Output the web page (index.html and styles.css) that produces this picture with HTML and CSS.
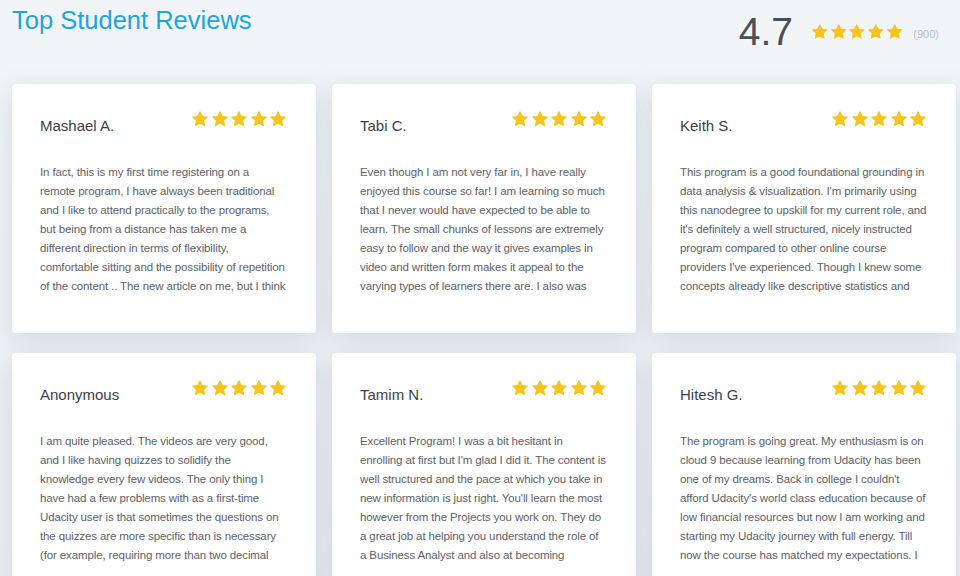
FILE: index.html
```html
<!DOCTYPE html>
<html lang="en">
<head>
  <meta charset="UTF-8">
  <meta name="viewport" content="width=device-width, initial-scale=1.0">
  <title>Top Student Reviews</title>
  <link rel="stylesheet" href="styles.css">
</head>

<body>
  <!-- one star shape, reused everywhere -->
  <svg class="defs" width="0" height="0">
    <symbol id="star" viewBox="0 0 24 24">
      <path d="M12 2.6l2.9 6.1 6.6.8-4.9 4.6 1.3 6.6L12 17.4l-5.9 3.3 1.3-6.6-4.9-4.6 6.6-.8z"
        fill="currentColor" stroke="currentColor" stroke-width="1.6" stroke-linejoin="round"/>
    </symbol>
  </svg>

  <div class="page">
    <header class="top">
      <h1 class="title">Top Student Reviews</h1>
      <div class="summary">
        <span class="score">4.7</span>
        <span class="stars">
          <svg><use href="#star"/></svg><svg><use href="#star"/></svg><svg><use href="#star"/></svg><svg><use href="#star"/></svg><svg><use href="#star"/></svg>
        </span>
        <span class="count">(900)</span>
      </div>
    </header>

    <div class="reviews">
      <div class="card">
        <div class="card-head">
          <span class="name">Mashael A.</span>
          <span class="stars">
            <svg><use href="#star"/></svg><svg><use href="#star"/></svg><svg><use href="#star"/></svg><svg><use href="#star"/></svg><svg><use href="#star"/></svg>
          </span>
        </div>
        <p class="text">In fact, this is my first time registering on a remote program, I have always been traditional and I like to attend practically to the programs, but being from a distance has taken me a different direction in terms of flexibility, comfortable sitting and the possibility of repetition of the content .. The new article on me, but I think</p>
      </div>

      <div class="card">
        <div class="card-head">
          <span class="name">Tabi C.</span>
          <span class="stars">
            <svg><use href="#star"/></svg><svg><use href="#star"/></svg><svg><use href="#star"/></svg><svg><use href="#star"/></svg><svg><use href="#star"/></svg>
          </span>
        </div>
        <p class="text">Even though I am not very far in, I have really enjoyed this course so far! I am learning so much that I never would have expected to be able to learn. The small chunks of lessons are extremely easy to follow and the way it gives examples in video and written form makes it appeal to the varying types of learners there are. I also was</p>
      </div>

      <div class="card">
        <div class="card-head">
          <span class="name">Keith S.</span>
          <span class="stars">
            <svg><use href="#star"/></svg><svg><use href="#star"/></svg><svg><use href="#star"/></svg><svg><use href="#star"/></svg><svg><use href="#star"/></svg>
          </span>
        </div>
        <p class="text">This program is a good foundational grounding in data analysis &amp; visualization. I'm primarily using this nanodegree to upskill for my current role, and it's definitely a well structured, nicely instructed program compared to other online course providers I've experienced. Though I knew some concepts already like descriptive statistics and</p>
      </div>

      <div class="card">
        <div class="card-head">
          <span class="name">Anonymous</span>
          <span class="stars">
            <svg><use href="#star"/></svg><svg><use href="#star"/></svg><svg><use href="#star"/></svg><svg><use href="#star"/></svg><svg><use href="#star"/></svg>
          </span>
        </div>
        <p class="text">I am quite pleased. The videos are very good, and I like having quizzes to solidify the knowledge every few videos. The only thing I have had a few problems with as a first-time Udacity user is that sometimes the questions on the quizzes are more specific than is necessary (for example, requiring more than two decimal</p>
      </div>

      <div class="card">
        <div class="card-head">
          <span class="name">Tamim N.</span>
          <span class="stars">
            <svg><use href="#star"/></svg><svg><use href="#star"/></svg><svg><use href="#star"/></svg><svg><use href="#star"/></svg><svg><use href="#star"/></svg>
          </span>
        </div>
        <p class="text">Excellent Program! I was a bit hesitant in enrolling at first but I'm glad I did it. The content is well structured and the pace at which you take in new information is just right. You'll learn the most however from the Projects you work on. They do a great job at helping you understand the role of a Business Analyst and also at becoming</p>
      </div>

      <div class="card">
        <div class="card-head">
          <span class="name">Hitesh G.</span>
          <span class="stars">
            <svg><use href="#star"/></svg><svg><use href="#star"/></svg><svg><use href="#star"/></svg><svg><use href="#star"/></svg><svg><use href="#star"/></svg>
          </span>
        </div>
        <p class="text">The program is going great. My enthusiasm is on cloud 9 because learning from Udacity has been one of my dreams. Back in college I couldn't afford Udacity's world class education because of low financial resources but now I am working and starting my Udacity journey with full energy. Till now the course has matched my expectations. I</p>
      </div>
    </div>
  </div>
</body>
</html>
```

FILE: styles.css
```css
body {
  margin: 0;
  font-family: "Liberation Sans", Arial, sans-serif;
  background: linear-gradient(#f2f5f8, #e9eff3);
  min-height: 100vh;
  overflow: hidden;
}

.defs {
  position: absolute;
}

.page {
  padding: 0 4px 0 12px;
}

.top {
  display: flex;
  justify-content: space-between;
  align-items: flex-start;
  height: 84px;
}

.title {
  margin: 6px 0 0;
  font-size: 25.5px;
  font-weight: normal;
  color: #1da5dc;
}

.summary {
  display: flex;
  align-items: center;
  gap: 10px;
  margin: 10px 17px 0 0;
}

.score {
  font-size: 39px;
  color: #4a4f57;
  margin-right: 8px;
}

.stars {
  display: flex;
  gap: 1.5px;
  color: #f4c51b;
}

.stars svg {
  width: 18px;
  height: 18px;
}

.summary .stars {
  gap: 1.2px;
}

.summary .stars svg {
  width: 17.5px;
  height: 17.5px;
}

.count {
  font-size: 11px;
  color: #b7bec6;
  margin-top: 4px;
}

.reviews {
  display: grid;
  grid-template-columns: repeat(3, 304px);
  gap: 20px 16px;
}

.card {
  background: white;
  border-radius: 4px;
  box-shadow: 0 6px 26px rgba(60, 90, 120, 0.16);
  height: 249px;
  padding: 26px 28px 0;
  box-sizing: border-box;
}

.card-head {
  display: flex;
  justify-content: space-between;
  align-items: flex-start;
  padding-right: 1px;
}

.name {
  margin-top: 6px;
  font-size: 15px;
  line-height: 20px;
  color: #3a414b;
}

.text {
  margin: 27px 1.2px 0 0;
  font-size: 11.5px;
  letter-spacing: -0.12px;
  line-height: 19px;
  color: #5e6268;
}
```
